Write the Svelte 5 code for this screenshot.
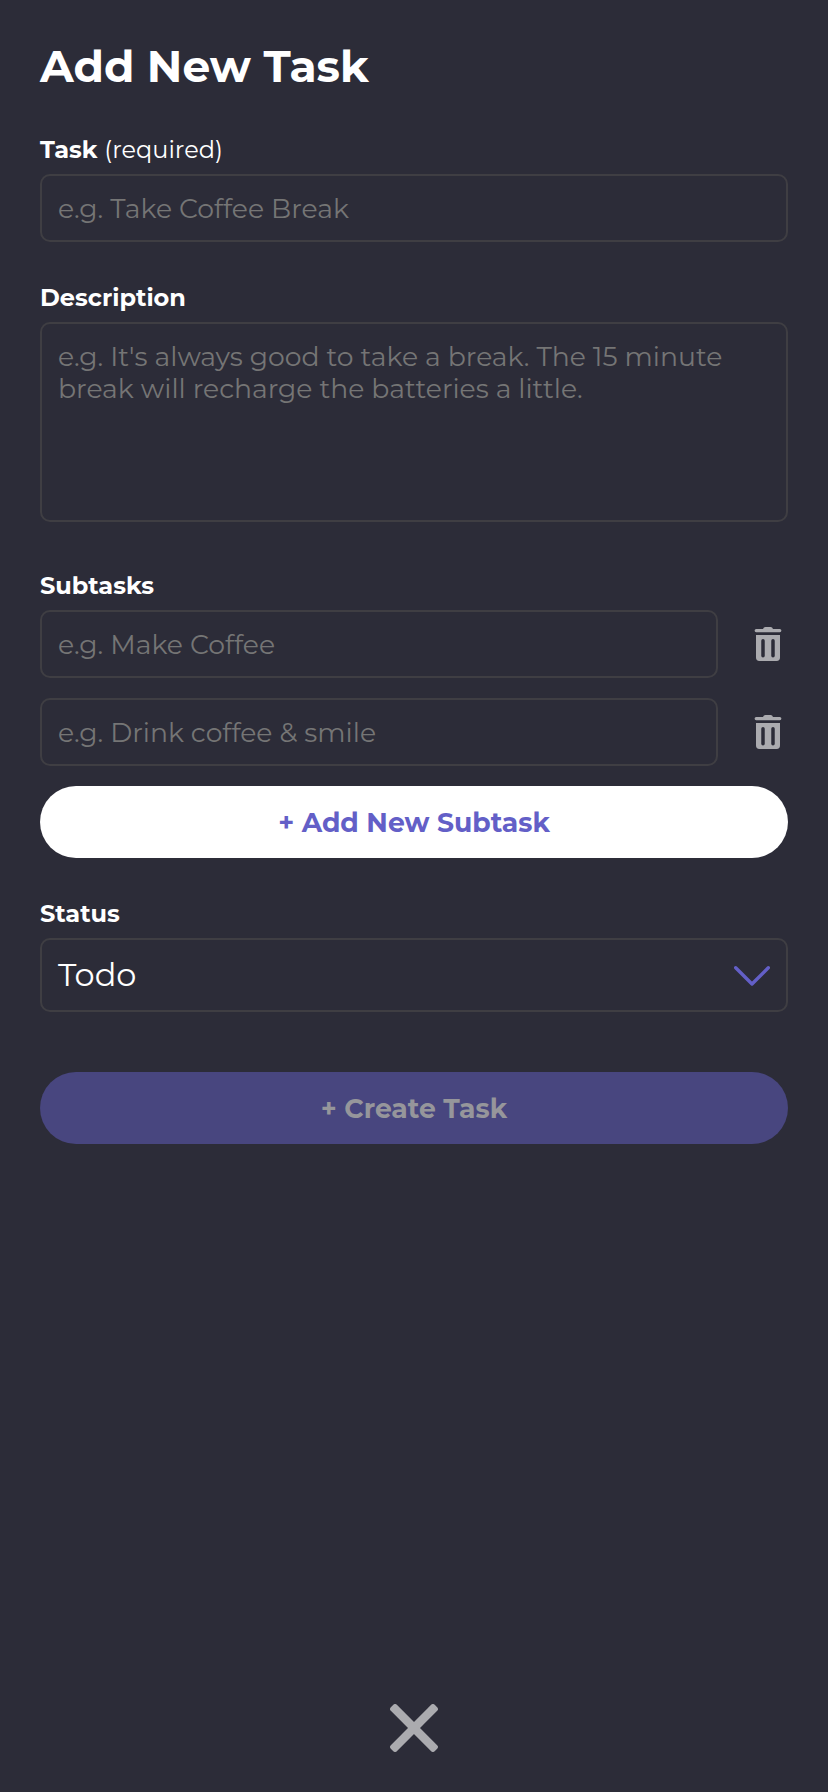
<script>
  let title = $state('');
  let description = $state('');
  let subtasks = $state([
    { text: '', hint: 'e.g. Make Coffee' },
    { text: '', hint: 'e.g. Drink coffee & smile' }
  ]);

  const addSubtask = () => subtasks.push({ text: '', hint: '' });
  const removeSubtask = (i) => subtasks.splice(i, 1);
</script>

<main>
  <h1>Add New Task</h1>

  <form onsubmit={(e) => e.preventDefault()}>
    <section>
      <label for="title">Task <span>(required)</span></label>
      <input id="title" placeholder="e.g. Take Coffee Break" bind:value={title} />
    </section>

    <section class="description">
      <label for="description">Description</label>
      <textarea
        id="description"
        placeholder="e.g. It's always good to take a break. The 15 minute break will recharge the batteries a little."
        bind:value={description}
      ></textarea>
    </section>

    <section>
      <div class="label">Subtasks</div>
      <div class="subtasks">
        {#each subtasks as subtask, i}
          <div class="row">
            <input placeholder={subtask.hint} bind:value={subtask.text} />
            <button type="button" class="icon" aria-label="Remove subtask" onclick={() => removeSubtask(i)}>
              <svg width="28" height="36" viewBox="0 0 28 36">
                <path d="M9 3 Q9.6 1 11.4 1 H16.6 Q18.4 1 19 3 H25.8 A1.6 1.6 0 0 1 25.8 6.2 H2.2 A1.6 1.6 0 0 1 2.2 3 Z" />
                <path
                  fill-rule="evenodd"
                  d="M2 9 H26 V31.5 A3.4 3.4 0 0 1 22.6 34.9 H5.4 A3.4 3.4 0 0 1 2 31.5 Z M9 13 A1.75 1.75 0 0 0 7.25 14.75 V29.7 A1.75 1.75 0 0 0 10.75 29.7 V14.75 A1.75 1.75 0 0 0 9 13 Z M19 13 A1.75 1.75 0 0 0 17.25 14.75 V29.7 A1.75 1.75 0 0 0 20.75 29.7 V14.75 A1.75 1.75 0 0 0 19 13 Z"
                />
              </svg>
            </button>
          </div>
        {/each}
        <button type="button" class="pill add" onclick={addSubtask}>+ Add New Subtask</button>
      </div>
    </section>

    <section>
      <div class="label">Status</div>
      <button type="button" class="select">
        <span>Todo</span>
        <svg width="36" height="20" viewBox="0 0 36 20">
          <path d="M1.7 1.8 L18 18 L34.3 1.8" />
        </svg>
      </button>
    </section>

    <button class="pill create" disabled={!title}>+ Create Task</button>
  </form>

  <button class="close" aria-label="Close">
    <svg width="48" height="48" viewBox="0 0 48 48">
      <rect x="-7" y="19.75" width="62" height="8.5" rx="2.5" transform="rotate(45 24 24)" />
      <rect x="-7" y="19.75" width="62" height="8.5" rx="2.5" transform="rotate(-45 24 24)" />
    </svg>
  </button>
</main>

<style>
  :global(body) {
    background: #2c2c38;
  }

  main {
    box-sizing: border-box;
    min-height: 1792px;
    padding: 40px;
    display: flex;
    flex-direction: column;
    background: #2c2c38;
    color: #fff;
    font-family: Montserrat, Inter, sans-serif;
  }

  h1 {
    margin: 0 0 42px;
    font-size: 44px;
    line-height: 52px;
    font-weight: 700;
  }

  form {
    display: flex;
    flex-direction: column;
    gap: 40px;
  }

  section {
    display: flex;
    flex-direction: column;
    gap: 8px;
  }

  .description {
    margin-bottom: 8px;
  }

  label,
  .label {
    font-size: 24px;
    line-height: 32px;
    font-weight: 700;
  }

  label span {
    font-weight: 400;
  }

  input,
  textarea,
  .select {
    box-sizing: border-box;
    width: 100%;
    margin: 0;
    padding: 0 16px;
    border: 2px solid #3f3e43;
    border-radius: 10px;
    background: transparent;
    color: #fff;
    font-family: inherit;
    font-size: 26.667px;
    outline: none;
  }

  input {
    height: 68px;
  }

  textarea {
    display: block;
    height: 200px;
    padding-top: 17px;
    line-height: 32px;
    resize: none;
  }

  input::placeholder,
  textarea::placeholder {
    color: #757575;
  }

  button {
    padding: 0;
    border: 0;
    background: none;
    font-family: inherit;
  }

  .subtasks {
    display: flex;
    flex-direction: column;
    gap: 20px;
  }

  .row {
    display: flex;
    align-items: center;
    gap: 36px;
    padding-right: 6px;
  }

  .row input {
    flex: 0 0 678px;
  }

  .icon,
  .icon svg,
  .close svg {
    display: block;
    fill: #ababaf;
  }

  .pill {
    height: 72px;
    border-radius: 36px;
    font-size: 26.667px;
    font-weight: 700;
  }

  .add {
    background: #fff;
    color: #635fc7;
  }

  .create {
    margin-top: 20px;
    background: #48467f;
    color: #96969b;
  }

  .select {
    display: flex;
    align-items: center;
    justify-content: space-between;
    height: 74px;
    padding-bottom: 2px;
    font-size: 32px;
  }

  .select svg {
    margin-top: 4px;
    fill: none;
    stroke: #635fc7;
    stroke-width: 3.4;
    stroke-linecap: round;
    stroke-linejoin: round;
  }

  .close {
    margin: auto auto 0;
  }
</style>
